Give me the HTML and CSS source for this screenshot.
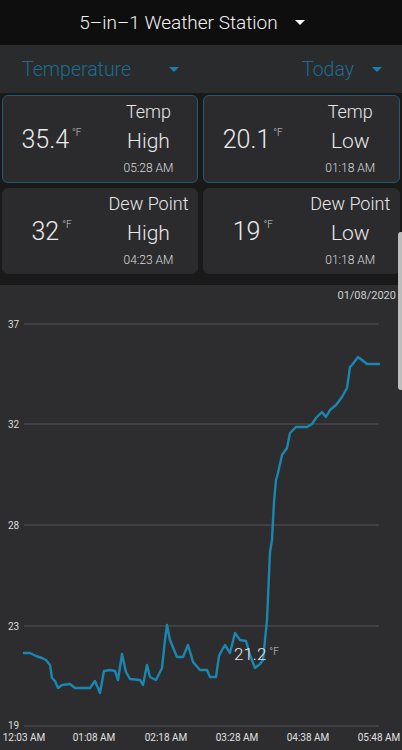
FILE: index.html
```html
<!DOCTYPE html>
<html lang="en">
<head>
	<meta charset="UTF-8">
	<title>5-in-1 Weather Station</title>
	<link rel="stylesheet" href="styles.css">
</head>
<body>
	<div class="app">
		<header class="topbar">
			<span class="title">5–in–1 Weather Station</span>
			<span class="caret caret-white"></span>
		</header>
		<div class="toolbar">
			<div class="select select-left">
				<span>Temperature</span>
				<span class="caret caret-blue"></span>
			</div>
			<div class="select select-right">
				<span>Today</span>
				<span class="caret caret-blue"></span>
			</div>
		</div>
		<div class="cards">
			<div class="card card-active">
				<div class="reading"><span class="value">35.4</span><span class="unit">°F</span></div>
				<div class="label">
					<span class="kind">Temp</span>
					<span class="extreme">High</span>
					<span class="time">05:28 AM</span>
				</div>
			</div>
			<div class="card card-active">
				<div class="reading"><span class="value">20.1</span><span class="unit">°F</span></div>
				<div class="label">
					<span class="kind">Temp</span>
					<span class="extreme">Low</span>
					<span class="time">01:18 AM</span>
				</div>
			</div>
			<div class="card">
				<div class="reading"><span class="value">32</span><span class="unit">°F</span></div>
				<div class="label">
					<span class="kind">Dew Point</span>
					<span class="extreme">High</span>
					<span class="time">04:23 AM</span>
				</div>
			</div>
			<div class="card">
				<div class="reading"><span class="value">19</span><span class="unit">°F</span></div>
				<div class="label">
					<span class="kind">Dew Point</span>
					<span class="extreme">Low</span>
					<span class="time">01:18 AM</span>
				</div>
			</div>
		</div>
		<div class="chart">
			<div class="chart-date">01/08/2020</div>
			<svg class="chart-svg" viewBox="0 285 402 465" width="402" height="465">
				<g class="grid">
					<line x1="24" y1="324" x2="379" y2="324"/>
					<line x1="24" y1="424" x2="379" y2="424"/>
					<line x1="24" y1="525" x2="379" y2="525"/>
					<line x1="24" y1="626" x2="379" y2="626"/>
					<line x1="24" y1="726" x2="379" y2="726"/>
				</g>
				<g class="ylabels">
					<text x="8" y="328">37</text>
					<text x="8" y="428">32</text>
					<text x="8" y="529">28</text>
					<text x="8" y="630">23</text>
					<text x="8" y="729">19</text>
				</g>
				<g class="xlabels">
					<text x="24" y="741">12:03 AM</text>
					<text x="94" y="741">01:08 AM</text>
					<text x="166" y="741">02:18 AM</text>
					<text x="237" y="741">03:28 AM</text>
					<text x="308" y="741">04:38 AM</text>
					<text x="379" y="741">05:48 AM</text>
				</g>
				<polyline class="series" points="24,653 30,653 36,656 42,658 46,660 50,665 52,678 55,681 58,688 62,685 70,684 75,688 90,688 95,681 98,688 100,693 104,671 110,670 115,671 118,680 122,654 126,672 130,679 140,680 143,685 147,665 150,677 156,680 162,668 165,640 167,625 170,640 172,645 177,657 183,657 188,645 191,655 193,662 200,670 207,670 210,677 216,677 219,656 222,650 225,645 230,653 235,633 240,640 246,641 250,655 255,668 260,664 263,660 265,640 267,620 270,552 272,540 274,502 276,480 278,473 282,455 287,448 290,433 296,427 307,427 312,424 316,418 322,412 326,417 330,410 336,405 342,397 347,388 350,367 352,365 358,357 362,360 367,364 379,364"/>
			</svg>
			<div class="tip"><span class="tip-value">21.2</span><span class="unit">°F</span></div>
		</div>
		<div class="scrollbar"></div>
	</div>
</body>
</html>
```
FILE: styles.css
```css
body {
	margin: 0;
	background-color: #1a1a1a;
	font-family: Roboto, "Noto Sans", sans-serif;
	color: #e8e8e8;
}
.app {
	position: relative;
	width: 402px;
	height: 750px;
	overflow: hidden;
	display: flex;
	flex-direction: column;
}
.topbar {
	height: 45px;
	background-color: #0e0e0e;
	display: flex;
	align-items: center;
	justify-content: center;
	gap: 17px;
	padding-right: 18px;
	box-sizing: border-box;
}
.title {
	font-size: 19px;
	font-weight: 300;
	color: #f2f2f2;
}
.caret {
	width: 0;
	height: 0;
	border-left: 5px solid transparent;
	border-right: 5px solid transparent;
	border-top: 5px solid #fff;
}
.caret-blue {
	border-top-color: #1a7fae;
}
.toolbar {
	height: 48px;
	background-color: #2a2b2d;
	display: flex;
	justify-content: space-between;
	align-items: center;
	padding: 0 20px 0 22px;
	font-size: 19.5px;
	font-weight: 300;
	color: #1c6d90;
}
.select {
	display: flex;
	align-items: center;
}
.select-left {
	gap: 38px;
}
.select-right {
	gap: 18px;
}
.cards {
	display: grid;
	grid-template-columns: 196px 197px;
	grid-template-rows: 88px 86px;
	column-gap: 5px;
	row-gap: 5px;
	padding: 2px 2px 11px 2px;
	background-color: #191919;
}
.card {
	background-color: #2b2b2d;
	border-radius: 6px;
	border: 1px solid #2b2b2d;
	box-sizing: border-box;
	display: grid;
	grid-template-columns: 1fr 1fr;
	align-items: center;
}
.card-active {
	border-color: #1f5a70;
}
.reading {
	display: flex;
	justify-content: center;
	align-items: flex-start;
	font-weight: 300;
}
.value {
	font-size: 25px;
	color: #ececec;
}
.unit {
	font-size: 10px;
	color: #cfcfcf;
	margin-left: 3px;
	margin-top: 2px;
}
.label {
	display: flex;
	flex-direction: column;
	align-items: center;
	font-weight: 300;
}
.kind {
	font-size: 18px;
	line-height: 24px;
}
.extreme {
	font-size: 21px;
	line-height: 34px;
}
.time {
	font-size: 12px;
	line-height: 20px;
	color: #dcdcdc;
}
.chart {
	position: relative;
	flex: 1;
	background-color: #2d2d2f;
}
.chart-date {
	position: absolute;
	right: 6px;
	top: 4px;
	font-size: 11px;
	color: #cfcfcf;
}
.chart-svg {
	display: block;
}
.grid line {
	stroke: #545456;
	stroke-width: 1;
}
.ylabels text {
	font-family: Roboto, sans-serif;
	font-size: 10px;
	fill: #dcdcdc;
}
.xlabels text {
	font-family: Roboto, sans-serif;
	font-size: 10px;
	fill: #e0e0e0;
	text-anchor: middle;
}
.series {
	fill: none;
	stroke: #1a87b0;
	stroke-width: 2.4;
	stroke-linejoin: round;
	stroke-linecap: round;
}
.tip {
	position: absolute;
	left: 234px;
	top: 359px;
	display: flex;
	align-items: flex-start;
	font-weight: 300;
}
.tip-value {
	font-size: 17px;
	color: #e6e6e6;
}
.scrollbar {
	position: absolute;
	right: 0;
	top: 232px;
	width: 4px;
	height: 158px;
	background-color: #bdbdbd;
	border-radius: 3px 0 0 3px;
}
```
